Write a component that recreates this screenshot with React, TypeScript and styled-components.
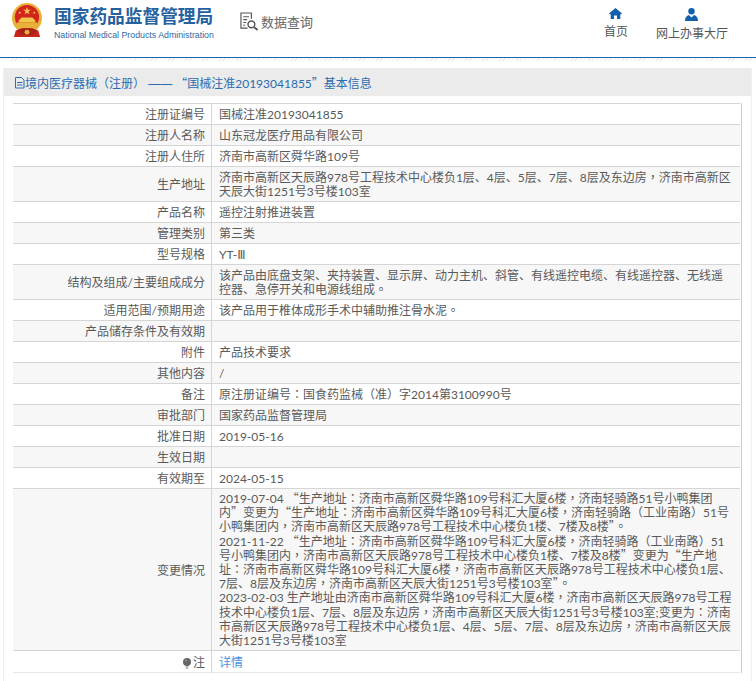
import { ReactElement } from "react";
import styled, { createGlobalStyle } from "styled-components";

const GlobalStyle = createGlobalStyle`
  html, body {
    margin: 0;
    padding: 0;
    background: #fff;
    font-family: Lato, "Noto Sans CJK SC", sans-serif;
    overflow: hidden;
  }
`;

const Page = styled.div`
  width: 756px;
  height: 681px;
  overflow: hidden;
`;

const Header = styled.header`
  display: flex;
  height: 57px;
  border-bottom: 1px solid #1b65a8;
`;

const Stripe = styled.div`
  height: 3px;
  background: repeating-linear-gradient(135deg, #ededed 0 1px, #fff 1px 3px);
`;

const Brand = styled.div`
  display: flex;
  width: 240px;
  padding: 3px 0 0 11px;
  box-sizing: border-box;
`;

const BrandText = styled.div`
  margin: 3px 0 0 11px;
  font-family: "Liberation Sans", "Noto Sans CJK SC", sans-serif;
`;

const BrandName = styled.div`
  color: #24619f;
  font-size: 17.7px;
  font-weight: 700;
  line-height: 22px;
  white-space: nowrap;
`;

const BrandEnglish = styled.div`
  margin-top: 2px;
  color: #2a6aa8;
  font-size: 8.8px;
  line-height: 11px;
  white-space: nowrap;
`;

const Query = styled.div`
  display: flex;
  align-items: center;
  gap: 2px;
  height: 42px;
  color: #666;
  font-size: 13px;
  white-space: nowrap;
`;

const Nav = styled.nav`
  display: flex;
  margin-left: auto;
  padding: 8px 28px 0 0;
  gap: 28px;
`;

const NavItem = styled.a`
  display: flex;
  flex-direction: column;
  align-items: center;
  gap: 5px;
  color: #555;
  font-size: 12px;
  line-height: 16px;
  text-decoration: none;
`;

const Panel = styled.section`
  margin: 7px 4px 0 3px;
  border: 1px solid #f0f0f0;
  border-top: 0;
`;

const PanelTitle = styled.h2`
  display: flex;
  align-items: center;
  height: 28px;
  margin: 0;
  padding-left: 11px;
  background: #ebebeb;
  color: #2b6cb0;
  font-size: 12px;
  font-weight: 400;
  white-space: pre;
`;

const TitleDash = styled.span`
  font-family: "Liberation Sans", sans-serif;
`;

const Body = styled.div`
  padding: 7px 9px 8px 9px;
`;

const TableWrap = styled.div`
  padding-right: 1px;
  border-right: 1px solid #ccc;
`;

const Table = styled.table`
  width: 100%;
  border-collapse: collapse;
  table-layout: fixed;
  color: #5a5a5a;
  font-size: 12px;
  line-height: 14px;
`;

const Row = styled.tr<{ $shaded: boolean }>`
  background: ${(p) => (p.$shaded ? "#f7f7f7" : "#fff")};
  border-top: 1px solid #d5d5d5;
`;

const LastRow = styled(Row)`
  border-bottom: 1px solid #e8e8e8;
`;

const LabelCell = styled.td`
  width: 192px;
  padding: 4px 6px 2px 0;
  border-right: 1px solid #d5d5d5;
  text-align: right;
  vertical-align: middle;
`;

const ValueCell = styled.td`
  padding: 4px 6px 2px 7px;
`;

const ChangeCell = styled(ValueCell)`
  padding: 3px 6px 2px 7px;
  line-height: 14.2px;
`;

const NoteCell = styled(ValueCell)`
  padding-top: 5px;
`;

const Detail = styled.a`
  color: #4a90e2;
  text-decoration: none;
`;

const Punct = styled.span<{ $numeral: boolean }>`
  font-family: ${(p) => (p.$numeral ? '"DejaVu Sans"' : '"Noto Sans CJK TC"')}, sans-serif;
  line-height: 0;
`;

const BulbIcon = styled.svg`
  vertical-align: -2px;
  margin-right: 2px;
`;

const changes = [
  "2019-07-04 “生产地址：济南市高新区舜华路109号科汇大厦6楼，济南轻骑路51号小鸭集团内”变更为“生产地址：济南市高新区舜华路109号科汇大厦6楼，济南轻骑路（工业南路）51号小鸭集团内，济南市高新区天辰路978号工程技术中心楼负1楼、7楼及8楼”。",
  "2021-11-22 “生产地址：济南市高新区舜华路109号科汇大厦6楼，济南轻骑路（工业南路）51号小鸭集团内，济南市高新区天辰路978号工程技术中心楼负1楼、7楼及8楼”变更为“生产地址：济南市高新区舜华路109号科汇大厦6楼，济南市高新区天辰路978号工程技术中心楼负1层、7层、8层及东边房，济南市高新区天辰大街1251号3号楼103室”。",
  "2023-02-03 生产地址由济南市高新区舜华路109号科汇大厦6楼，济南市高新区天辰路978号工程技术中心楼负1层、7层、8层及东边房，济南市高新区天辰大街1251号3号楼103室;变更为：济南市高新区天辰路978号工程技术中心楼负1层、4层、5层、7层、8层及东边房，济南市高新区天辰大街1251号3号楼103室",
];

const rows: [string, string][] = [
  ["注册证编号", "国械注准20193041855"],
  ["注册人名称", "山东冠龙医疗用品有限公司"],
  ["注册人住所", "济南市高新区舜华路109号"],
  ["生产地址", "济南市高新区天辰路978号工程技术中心楼负1层、4层、5层、7层、8层及东边房，济南市高新区天辰大街1251号3号楼103室"],
  ["产品名称", "遥控注射推进装置"],
  ["管理类别", "第三类"],
  ["型号规格", "YT-Ⅲ"],
  ["结构及组成/主要组成成分", "该产品由底盘支架、夹持装置、显示屏、动力主机、斜管、有线遥控电缆、有线遥控器、无线遥控器、急停开关和电源线组成。"],
  ["适用范围/预期用途", "该产品用于椎体成形手术中辅助推注骨水泥。"],
  ["产品储存条件及有效期", ""],
  ["附件", "产品技术要求"],
  ["其他内容", "/"],
  ["备注", "原注册证编号：国食药监械（准）字2014第3100990号"],
  ["审批部门", "国家药品监督管理局"],
  ["批准日期", "2019-05-16"],
  ["生效日期", ""],
  ["有效期至", "2024-05-15"],
];

// the page's font centres its punctuation, Noto's TC cut is the nearest
function Rich({ text }: { text: string }): ReactElement {
  const parts = text.split(/([“”：，（）。Ⅲ]+)/);
  return (
    <>
      {parts.map((part, i) =>
        i % 2 === 1 ? (
          <Punct key={i} $numeral={part === "Ⅲ"}>
            {part}
          </Punct>
        ) : (
          part
        ),
      )}
    </>
  );
}

function Emblem(): ReactElement {
  return (
    <svg width="32" height="35" viewBox="0 0 33 36">
      <path d="M5 28 L3 35 H30 L28 28 Z" fill="#c8261c" />
      <circle cx="16.5" cy="15.500" r="15.500" fill="#e8b23a" />
      <circle cx="16.5" cy="14.500" r="12.500" fill="#d2261c" />
      <path d="M16.5 4l1 3h3l-2.500 1.800 1 3-2.500-1.800-2.500 1.800 1-3L12.500 7h3z" fill="#f2c84b" />
      <circle cx="9" cy="10" r="1" fill="#f2c84b" />
      <circle cx="24" cy="10" r="1" fill="#f2c84b" />
      <path d="M8 20h17v-2l-3-3H11l-3 3z" fill="#f2c84b" />
      <rect x="6" y="20" width="21" height="6" fill="#e8b23a" />
      <path d="M6 28l5 5h11l5-5-5-2H11z" fill="#a9221a" />
      <circle cx="16.500" cy="30" r="2.500" fill="#e8b23a" />
    </svg>
  );
}

function QueryIcon(): ReactElement {
  return (
    <svg width="19" height="19" viewBox="0 0 20 20" fill="none" stroke="#555" strokeWidth="1.200">
      <path d="M8 17H1V1h11v6" />
      <path d="M3.500 5h6M3.500 8h4M3.500 11h3M3.500 14h2" />
      <circle cx="12" cy="13" r="3.600" strokeWidth="1.500" />
      <path d="M15 16l3.500 3" strokeWidth="2" />
    </svg>
  );
}

function HomeIcon(): ReactElement {
  return (
    <svg width="13" height="11" viewBox="0 0 13 11" fill="#1160ab">
      <path d="M6.500 0L0 5.500 1 6.500 1.700 6V11H5V7.500H8V11H11.300V6L12 6.500 13 5.500z" />
    </svg>
  );
}

function UserIcon(): ReactElement {
  return (
    <svg width="13" height="13" viewBox="0 0 13 13" fill="#1160ab">
      <circle cx="6.500" cy="3.300" r="3.200" />
      <path d="M0 13c0-3.500 1.500-5.500 4-6l2.500 2.500L9 7c2.500.5 4 2.500 4 6z" />
    </svg>
  );
}

function DocIcon(): ReactElement {
  return (
    <svg width="10" height="13" viewBox="0 0 10 13" fill="none" stroke="#2b6cb0">
      <path d="M.5 1.500h6l2.500 2.500v8h-8.500z" />
      <path d="M2 6.500h5.500M2 9h5.500" />
    </svg>
  );
}

function Bulb(): ReactElement {
  return (
    <BulbIcon width="8" height="11" viewBox="0 0 8 11">
      <circle cx="4" cy="4" r="4" fill="#666" />
      <circle cx="3" cy="2.500" r="1" fill="#999" />
      <path d="M2.500 8h3l-.5 3h-2z" fill="#bbb" />
    </BulbIcon>
  );
}

function App(): ReactElement {
  return (
    <Page>
      <GlobalStyle />
      <Header>
        <Brand>
          <Emblem />
          <BrandText>
            <BrandName>国家药品监督管理局</BrandName>
            <BrandEnglish>National Medical Products Administration</BrandEnglish>
          </BrandText>
        </Brand>
        <Query>
          <QueryIcon />
          数据查询
        </Query>
        <Nav>
          <NavItem>
            <HomeIcon />
            首页
          </NavItem>
          <NavItem>
            <UserIcon />
            网上办事大厅
          </NavItem>
        </Nav>
      </Header>
      <Stripe />
      <Panel>
        <PanelTitle>
          <DocIcon />
          <span>
            <Rich text="境内医疗器械（注册） " />
            <TitleDash>——</TitleDash>
            <Rich text=" “国械注准20193041855”基本信息" />
          </span>
        </PanelTitle>
        <Body>
          <TableWrap>
            <Table>
              <tbody>
                {rows.map(([label, value], i) => (
                  <Row key={label} $shaded={i % 2 === 1}>
                    <LabelCell>{label}</LabelCell>
                    <ValueCell>
                      <Rich text={value} />
                    </ValueCell>
                  </Row>
                ))}
                <Row $shaded>
                  <LabelCell>变更情况</LabelCell>
                  <ChangeCell>
                    {changes.map((c) => (
                      <div key={c}>
                        <Rich text={c} />
                      </div>
                    ))}
                  </ChangeCell>
                </Row>
                <LastRow $shaded={false}>
                  <LabelCell>
                    <Bulb />注
                  </LabelCell>
                  <NoteCell>
                    <Detail>详情</Detail>
                  </NoteCell>
                </LastRow>
              </tbody>
            </Table>
          </TableWrap>
        </Body>
      </Panel>
    </Page>
  );
}

export default App;
